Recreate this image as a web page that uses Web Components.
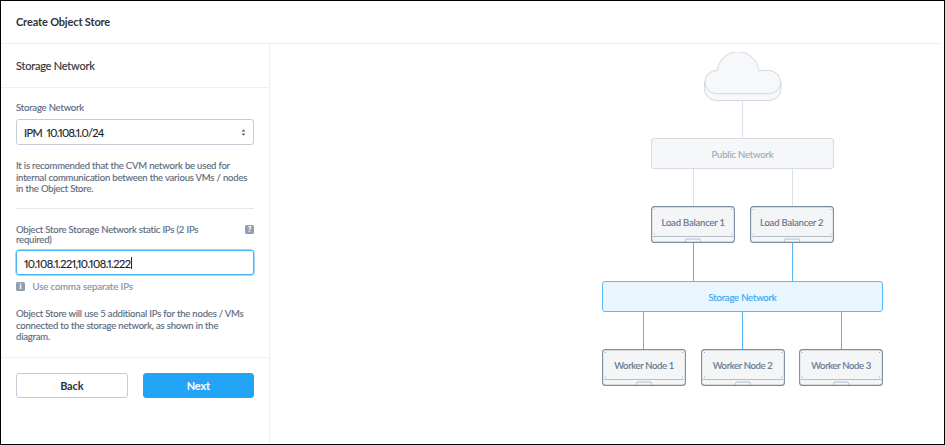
<!DOCTYPE html>
<html lang="en">
<head>
<meta charset="utf-8">
<title>Create Object Store</title>
<style>
  html, body { margin: 0; height: 100%; }
  body {
    font-family: Lato, "Liberation Sans", sans-serif;
    font-size: 9.5px;
    letter-spacing: -0.18px;
    -webkit-text-stroke: 0.15px;
    color: #5b6c80;
    background: #fff;
    overflow: hidden;
  }
</style>
</head>
<body>
<wizard-page heading="Create Object Store">
  <side-panel slot="side" heading="Storage Network">
    <form-field>
      <span slot="label">Storage Network</span>
      <select-box>IPM&nbsp; 10.108.1.0/24</select-box>
    </form-field>
    <help-text style="margin-top: 15px">It is recommended that the CVM network be used for<br>internal communication between the various VMs / nodes<br>in the Object Store.</help-text>
    <panel-rule></panel-rule>
    <form-field tight>
      <span slot="label">Object Store Storage Network static IPs (2 IPs<br>required)</span>
      <glyph-badge slot="help">?</glyph-badge>
      <text-input>10.108.1.221,10.108.1.222</text-input>
    </form-field>
    <hint-line>Use comma separate IPs</hint-line>
    <help-text style="margin-top: 16px">Object Store will use 5 additional IPs for the nodes / VMs<br>connected to the storage network, as shown in the<br>diagram.</help-text>
    <push-button slot="actions">Back</push-button>
    <push-button slot="actions" primary>Next</push-button>
  </side-panel>
  <network-diagram></network-diagram>
</wizard-page>

<script>
(function () {
  function define(name, html) {
    const template = document.createElement("template");
    template.innerHTML = html;

    customElements.define(name, class extends HTMLElement {
      constructor() {
        super();
        const root = this.attachShadow({ mode: "open" });
        root.appendChild(template.content.cloneNode(true));
      }

      connectedCallback() {
        const heading = this.shadowRoot.querySelector("[data-heading]");
        if (heading) {
          heading.textContent = this.getAttribute("heading");
        }
      }
    });
  }

  define("wizard-page", `<style>
    :host {
      display: flex;
      flex-direction: column;
      box-sizing: border-box;
      width: 945px;
      height: 445px;
      border: 1px solid #000;
    }
    header {
      box-sizing: border-box;
      height: 43px;
      padding: 13px 15px 0;
      margin-right: 4px;
      border-bottom: 1px solid #eceef2;
      font-size: 11px;
      font-weight: 700;
      line-height: 15px;
      letter-spacing: -0.15px;
      -webkit-text-stroke: 0;
      color: #30343a;
    }
    .body { display: flex; flex: 1; }
    main { flex: 1; display: flex; justify-content: flex-end; padding: 8px 61px 0 0; }
  </style>
  <header data-heading></header>
  <div class="body">
    <slot name="side"></slot>
    <main><slot></slot></main>
  </div>`);

  define("side-panel", `<style>
    :host {
      display: flex;
      flex-direction: column;
      box-sizing: border-box;
      width: 269px;
      border-right: 1px solid #eeeff4;
    }
    h2 {
      box-sizing: border-box;
      height: 44px;
      margin: 0;
      padding: 14px 15px 0;
      border-bottom: 1px solid #eeeff4;
      font-size: 11px;
      font-weight: 400;
      line-height: 15px;
      letter-spacing: -0.22px;
      color: #30343a;
    }
    .content {
      box-sizing: border-box;
      height: 270px;
      padding: 14px 15px 0;
      border-bottom: 1px solid #eeeff4;
    }
    .actions { display: grid; grid-template-columns: 1fr 1fr; gap: 15px; padding: 15px 15px 0; }
  </style>
  <h2 data-heading></h2>
  <div class="content"><slot></slot></div>
  <div class="actions"><slot name="actions"></slot></div>`);

  define("form-field", `<style>
    :host { display: block; }
    .top { display: flex; justify-content: space-between; margin-bottom: 5px; line-height: 12px; white-space: nowrap; }
    :host([tight]) .top { line-height: 9.5px; margin-bottom: 6px; }
  </style>
  <div class="top"><slot name="label"></slot><slot name="help"></slot></div>
  <slot></slot>`);

  define("select-box", `<style>
    :host {
      display: flex;
      align-items: center;
      justify-content: space-between;
      box-sizing: border-box;
      height: 26px;
      padding: 1px 7px 0 7px;
      border: 1px solid #c3cbd6;
      border-radius: 3px;
      font-size: 11px;
      font-variant-numeric: proportional-nums;
      letter-spacing: -0.62px;
      color: #202329;
    }
  </style>
  <span><slot></slot></span>
  <svg width="5" height="7" viewBox="0 0 5 7" fill="#59677a"><path d="M.5 2.600 2.500.3l2 2.300zM.5 4.400h4l-2 2.300z"/></svg>`);

  define("text-input", `<style>
    :host {
      display: flex;
      align-items: center;
      box-sizing: border-box;
      height: 25px;
      padding: 1px 7px 0 7px;
      border: 1px solid #4ab2f7;
      border-radius: 3px;
      box-shadow: 0 0 0 0.5px #4ab2f7;
      font-size: 11px;
      font-variant-numeric: proportional-nums;
      letter-spacing: -0.5px;
      color: #202329;
    }
    i { width: 1px; height: 12px; margin-left: 0.5px; background: #202329; }
  </style>
  <slot></slot><i></i>`);

  define("help-text", `<style>
    :host { display: block; line-height: 11.5px; white-space: nowrap; }
  </style>
  <slot></slot>`);

  define("panel-rule", `<style>
    :host { display: block; height: 1px; margin: 13.5px 0 16px; background: #e6e8f0; }
  </style>`);

  define("glyph-badge", `<style>
    :host {
      display: block;
      width: 9px;
      height: 9px;
      border-radius: 1.5px;
      background: #929fae;
      color: #fff;
      font-size: 8px;
      font-weight: 700;
      line-height: 9px;
      letter-spacing: 0;
      text-align: center;
    }
  </style>
  <slot></slot>`);

  define("hint-line", `<style>
    :host { display: flex; align-items: center; gap: 7.5px; height: 12px; margin-top: 5px; color: #8491a1; letter-spacing: -0.05px; white-space: nowrap; }
  </style>
  <glyph-badge>i</glyph-badge>
  <span><slot></slot></span>`);

  define("push-button", `<style>
    :host {
      display: flex;
      align-items: center;
      justify-content: center;
      box-sizing: border-box;
      height: 25px;
      border: 1px solid #c3cbd6;
      border-radius: 3px;
      font-size: 11px;
      font-weight: 700;
      color: #30343a;
      -webkit-text-stroke: 0;
    }
    :host([primary]) { border-color: #22a5f7; background: #22a5f7; color: #fff; }
  </style>
  <slot></slot>`);

  define("network-bar", `<style>
    :host {
      display: flex;
      align-items: center;
      justify-content: center;
      box-sizing: border-box;
      width: 183px;
      height: 31px;
      padding-top: 2px;
      border: 1px solid #d5dae3;
      border-radius: 3px;
      background: #f5f7f9;
      color: #a1abba;
    }
    :host([active]) { width: 281px; border-color: #5abafa; background: #eaf6ff; color: #35a8f3; }
  </style>
  <slot></slot>`);

  define("server-node", `<style>
    :host { display: grid; width: 84px; height: 37px; color: #66768b; }
    svg, span { grid-area: 1 / 1; }
    span { padding-top: 11px; line-height: 12px; text-align: center; white-space: nowrap; }
  </style>
  <svg width="84" height="37" viewBox="0 0 84 37" fill="none">
    <rect x=".6" y=".6" width="82.8" height="35.8" rx="3" fill="#f3f5f7" stroke="#7c8b9e" stroke-width="1.1"/>
    <path d="M1.500 30.500h81M34.500 36v-1.500q0-1.500 1.500-1.500h12q1.500 0 1.500 1.500V36" stroke="#aeb8c5" stroke-width=".9"/>
    <path d="M3 3h1v1H3zM80 3h1v1h-1zM3 27.500h1v1H3zM80 27.500h1v1h-1z" fill="#a0acba"/>
  </svg>
  <span><slot></slot></span>`);

  define("link-row", `<style>
    :host { display: flex; justify-content: center; gap: 98px; height: 37px; }
    :host([long]) { height: 38px; }
    i { width: 1px; background: #dadfe8; }
    :host([active]) i { background: #51b5f8; }
    i.extra { display: none; }
    :host([count="2"]) i.two, :host([count="3"]) i { display: block; }
  </style>
  <i></i><i class="extra two"></i><i class="extra"></i>`);

  define("network-diagram", `<style>
    :host { display: flex; flex-direction: column; align-items: center; width: 281px; }
    .row { display: flex; gap: 14.5px; }
    .workers { letter-spacing: -0.35px; }
    .cloud { display: block; }
  </style>
  <svg class="cloud" width="78" height="49" viewBox="0 0 78 49" fill="#f7f8fa" stroke="#d2d7e1">
    <path d="M.5 30v6.500a12 12 0 0 0 12 12H65a12 12 0 0 0 12-12V30z"/>
    <path d="M12.500 41.700a11.600 11.600 0 0 1 0-23.200h.8a20.800 20.800 0 0 1 41.400 0H65a11.600 11.600 0 0 1 0 23.200z"/>
  </svg>
  <link-row count="1"></link-row>
  <network-bar>Public Network</network-bar>
  <link-row count="2"></link-row>
  <div class="row"><server-node>Load Balancer 1</server-node><server-node>Load Balancer 2</server-node></div>
  <link-row count="2" active long></link-row>
  <network-bar active>Storage Network</network-bar>
  <link-row count="3" active></link-row>
  <div class="row workers"><server-node>Worker Node 1</server-node><server-node>Worker Node 2</server-node><server-node>Worker Node 3</server-node></div>`);
})();
</script>
</body>
</html>
